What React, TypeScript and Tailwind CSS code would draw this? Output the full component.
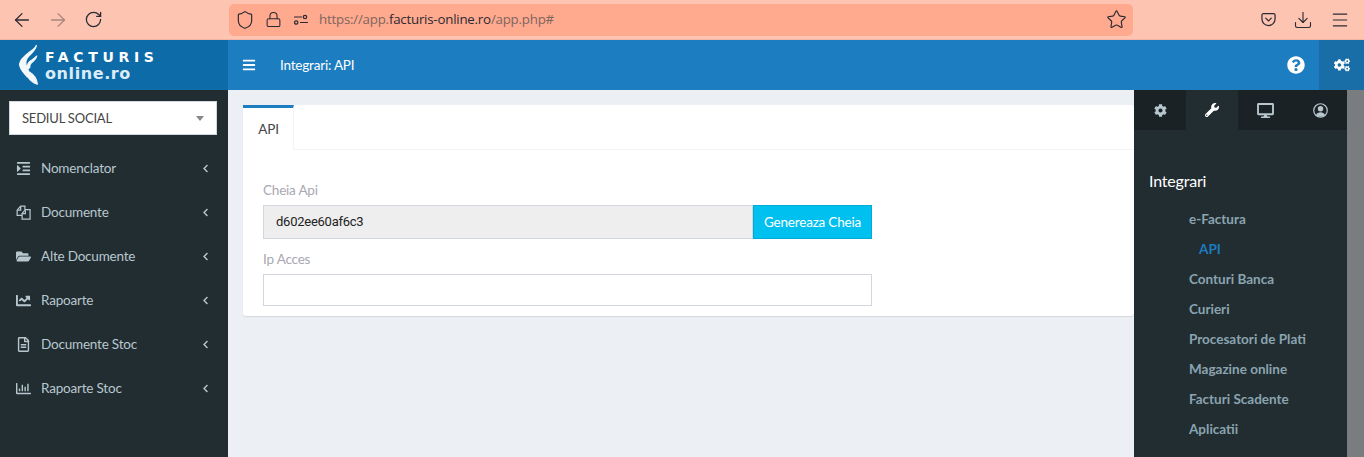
import {
  FaBars,
  FaChartLine,
  FaChevronLeft,
  FaCog,
  FaCogs,
  FaDesktop,
  FaFolderOpen,
  FaIndent,
  FaQuestionCircle,
  FaRegChartBar,
  FaRegFileAlt,
  FaWrench,
} from 'react-icons/fa';
import { ArrowLeft, ArrowRight, Download, Lock, Menu, RotateCw, Shield, Star } from 'lucide-react';

const sans = "font-['Lato','Noto_Sans',sans-serif] tracking-[-0.2px]";

function FilesIcon({ className }: { className?: string }) {
  return (
    <svg viewBox="0 0 16 16" className={className} fill="none" stroke="currentColor" strokeWidth="1.3">
      <path d="M6.5 11H1.2V5.5L5 1.2h4.5V5" />
      <path d="M5 1.5V5.5H1.5" />
      <path d="M6.5 15V9L10 5h5v10z" />
      <path d="M10 5.5v3.8H6.5" />
    </svg>
  );
}

const menu = [
  { label: 'Nomenclator', icon: FaIndent },
  { label: 'Documente', icon: FilesIcon },
  { label: 'Alte Documente', icon: FaFolderOpen },
  { label: 'Rapoarte', icon: FaChartLine },
  { label: 'Documente Stoc', icon: FaRegFileAlt },
  { label: 'Rapoarte Stoc', icon: FaRegChartBar },
];

const links = ['Conturi Banca', 'Curieri', 'Procesatori de Plati', 'Magazine online', 'Facturi Scadente', 'Aplicatii'];

function BrowserBar() {
  return (
    <div className="h-10 flex items-center bg-[#fec4b2] border-b border-[#f2b5a3] text-[#2b2a33] font-['Open_Sans',sans-serif]">
      <div className="w-[229px] flex items-center pl-[11px] gap-[14px]">
        <ArrowLeft className="w-[22px] h-[22px]" strokeWidth={1.4} />
        <ArrowRight className="w-[22px] h-[22px] opacity-40" strokeWidth={1.4} />
        <RotateCw className="w-[19px] h-[19px] ml-[1px]" strokeWidth={1.6} />
      </div>
      <div className="w-[904px] h-8 bg-[#ffa98e] rounded-[5px] flex items-center pl-[6px] pr-[6px]">
        <Shield className="w-5 h-5" strokeWidth={1.4} />
        <Lock className="w-[17px] h-[17px] ml-[10px]" strokeWidth={1.5} />
        <svg viewBox="0 0 16 16" className="w-[16px] h-4 ml-[11px]" fill="none" stroke="currentColor" strokeWidth="1.2">
          <circle cx="3.2" cy="10.5" r="1.7" />
          <circle cx="12" cy="5" r="1.7" />
          <path d="M1 5h8M7 10.5h8" />
        </svg>
        <span className="ml-[10px] text-[13.3px] tracking-[-0.22px] text-[#7d665e]">
          https://app.<span className="text-[#2b2a33]">facturis-online.ro</span>/app.php#
        </span>
        <Star className="w-[21px] h-[21px] ml-auto" strokeWidth={1.3} />
      </div>
      <div className="flex-1 flex items-center justify-end pr-[14px] gap-[17px]">
        <svg viewBox="0 0 16 16" className="w-[15px] h-[15px]" fill="none" stroke="currentColor" strokeWidth="1.3">
          <path d="M2.5 1.8h11a1.5 1.5 0 0 1 1.5 1.5v4.2a7 7 0 0 1-14 0V3.3a1.5 1.5 0 0 1 1.5-1.5z" />
          <path d="M5 6.5l3 3 3-3" strokeLinecap="round" />
        </svg>
        <Download className="w-5 h-5" strokeWidth={1.35} />
        <Menu className="w-5 h-5" strokeWidth={1.35} />
      </div>
    </div>
  );
}

function Logo() {
  return (
    <div className="w-[228px] h-[50px] bg-[#0d6ba8] flex items-center pl-[18px] gap-[7px] text-white shrink-0">
      <svg viewBox="20 10 60 125" className="w-[20px] h-[42px]" fill="#f3f8fb" stroke="#f3f8fb" strokeWidth="4" strokeLinejoin="round">
        <path d="M75 14C72 30 60 36 50 48C44 56 42 64 44 72C46 80 50 86 52 92L48 108C38 96 24 84 25 70C26 56 42 44 55 34C64 28 72 22 75 14z" />
        <path d="M76 46C74 56 66 60 60 66C55 71 54 76 55 80L50 84C46 74 50 66 58 60C64 56 72 52 76 46z" />
        <path d="M54 94C64 100 76 112 78 130C68 126 56 118 50 108z" />
      </svg>
      <div className="flex flex-col font-['DejaVu_Sans',sans-serif]">
        <span className="text-[14px] leading-[16px] tracking-[4.7px] font-bold">FACTURIS</span>
        <span className="text-[16px] leading-[17px] tracking-[0.6px] font-bold text-[#dcecf6]">online.ro</span>
      </div>
    </div>
  );
}

function TopNav() {
  return (
    <div className="flex h-[50px]">
      <Logo />
      <div className={`flex-1 bg-[#1c7dc0] flex items-center text-white ${sans}`}>
        <FaBars className="w-[14px] h-[14px] ml-[14px]" />
        <span className="ml-[24px] text-[13.5px]">Integrari: API</span>
        <FaQuestionCircle className="w-[18px] h-[18px] ml-auto mr-[14px]" />
        <div className="w-[45px] h-full bg-[#1a6ea8] flex items-center justify-center">
          <FaCogs className="w-[16px] h-[16px]" />
        </div>
      </div>
    </div>
  );
}

function Sidebar() {
  return (
    <aside className={`w-[228px] shrink-0 bg-[#222d32] pt-[11px] ${sans}`}>
      <div className="mx-[9px] w-[208px] h-[34px] bg-white border border-[#d2d6de] flex items-center pl-[12px] pr-[12px] pt-[1px] text-[13px] text-[#444]">
        SEDIUL SOCIAL
        <span className="ml-auto w-0 h-0 border-x-[4px] border-x-transparent border-t-[5px] border-t-[#888]" />
      </div>
      <nav className="mt-[11px]">
        {menu.map(({ label, icon: Icon }) => (
          <div key={label} className="h-11 flex items-center pl-[16px] pr-[19px] text-[13.5px] text-[#b8c7ce]">
            <span className="w-[25px]">
              <Icon className="w-[15px] h-[15px]" />
            </span>
            {label}
            <FaChevronLeft className="w-[7px] h-[9px] ml-auto" />
          </div>
        ))}
      </nav>
    </aside>
  );
}

function ApiCard() {
  return (
    <div className="bg-white rounded-[3px] shadow-[0_1px_1px_rgba(0,0,0,0.1)] h-[211px]">
      <div className="h-[45px] border-b border-[#f4f4f4] flex">
        <div className="w-[51px] h-[45px] bg-white border-t-[3px] border-t-[#1c7dc0] border-r border-r-[#f4f4f4] flex items-center justify-center pl-[1px] text-[13.5px] text-[#444]">
          API
        </div>
      </div>
      <div className="pl-[20px] w-[629px] pt-[30px] text-[13.5px]">
        <div className="h-[20px] leading-[20px] text-[#a8a8b0]">Cheia Api</div>
        <div className="flex h-[34px] mt-[5px]">
          <div className="flex-1 bg-[#eee] border border-[#d2d6de] flex items-center pl-[12px] font-['Roboto',sans-serif] text-[13px] tracking-[-0.25px] text-[#222]">
            d602ee60af6c3
          </div>
          <div className="w-[119px] bg-[#00c0ef] border border-[#00acd6] flex items-center justify-center text-white">
            Genereaza Cheia
          </div>
        </div>
        <div className="h-[20px] leading-[20px] text-[#a8a8b0] mt-[10px]">Ip Acces</div>
        <div className="h-[32px] border border-[#d2d6de] mt-[5px]" />
      </div>
    </div>
  );
}

function ControlSidebar() {
  return (
    <aside className={`w-[213px] shrink-0 bg-[#222d32] ${sans}`}>
      <div className="h-10 flex bg-[#1a2226] text-[#b8c7ce]">
        <div className="w-[52px] flex items-center justify-center">
          <FaCog className="w-[13px] h-[13px]" />
        </div>
        <div className="w-[52px] bg-[#222d32] flex items-center justify-center text-white">
          <FaWrench className="w-[14px] h-[14px]" />
        </div>
        <div className="w-[55px] flex items-center justify-center">
          <FaDesktop className="w-[17px] h-[15px]" />
        </div>
        <div className="w-[54px] flex items-center justify-center">
          <svg viewBox="0 0 16 16" className="w-[15px] h-[15px]">
            <circle cx="8" cy="8" r="7.2" fill="none" stroke="currentColor" strokeWidth="1.3" />
            <circle cx="8" cy="6.2" r="2.9" fill="currentColor" />
            <path d="M3.2 12.8C4 10.6 6 9.8 8 9.8s4 .8 4.8 3C11.5 14 9.8 14.6 8 14.6S4.5 14 3.2 12.8z" fill="currentColor" />
          </svg>
        </div>
      </div>
      <h3 className="mt-[40px] ml-[15px] text-[16px] leading-[21px] text-white">Integrari</h3>
      <ul className="mt-[13px] text-[13.5px] font-bold tracking-normal text-[#8aa4af]">
        <li className="h-[30px] leading-[30px] pl-[55px]">e-Factura</li>
        <li className="h-[30px] leading-[30px] pl-[65px] text-[#1c7dc0]">API</li>
        {links.map((link) => (
          <li key={link} className="h-[30px] leading-[30px] pl-[55px]">
            {link}
          </li>
        ))}
      </ul>
    </aside>
  );
}

export default function App() {
  return (
    <div className="w-[1364px] h-[457px] overflow-hidden flex flex-col">
      <BrowserBar />
      <TopNav />
      <div className="flex flex-1 min-h-0">
        <Sidebar />
        <main className={`flex-1 min-w-0 bg-[#ecf0f5] pl-[15px] pt-[15px] overflow-hidden ${sans}`}>
          <ApiCard />
        </main>
        <ControlSidebar />
        <div className="w-[17px] shrink-0 bg-[#7a7d80]" />
      </div>
    </div>
  );
}
